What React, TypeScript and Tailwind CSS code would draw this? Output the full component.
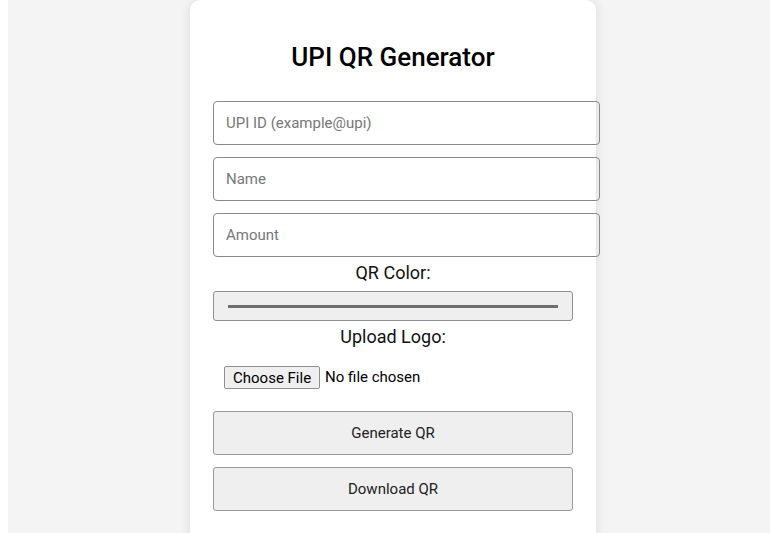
import React from 'react';

const font = { fontFamily: 'Roboto, "Noto Sans", sans-serif' };

export default function App() {
  return (
    <div className="h-[533px] overflow-hidden bg-white pl-2" style={font}>
      <div className="h-full bg-[#f4f4f4]">
        <div className="ml-[182px] h-[560px] w-[406px] rounded-[10px] bg-white px-[23px] pt-[42px] shadow-[0_0_12px_rgba(0,0,0,0.1)]">
          <h2 className="text-center text-[26px] leading-[30px] font-medium text-black">UPI QR Generator</h2>

          <div className="mt-[29px] flex flex-col">
            <input
              type="text"
              placeholder="UPI ID (example@upi)"
              className="box-content block w-full rounded-[4px] border border-[#8a8a8a] py-3 pl-3 pr-[13px] text-[15px] leading-[18px] placeholder:text-[#777] focus:outline-none"
            />
            <input
              type="text"
              placeholder="Name"
              className="mt-3 box-content block w-full rounded-[4px] border border-[#8a8a8a] py-3 pl-3 pr-[13px] text-[15px] leading-[18px] placeholder:text-[#777] focus:outline-none"
            />
            <input
              type="number"
              placeholder="Amount"
              className="mt-3 box-content block w-full rounded-[4px] border border-[#8a8a8a] py-3 pl-3 pr-[13px] text-[15px] leading-[18px] placeholder:text-[#777] focus:outline-none"
            />

            <label className="mt-[5px] block text-center text-[18px] leading-[22px] text-[#111]">QR Color:</label>
            <div className="mt-[7px] flex h-[30px] w-full items-center rounded-[3px] border border-[#8f8f8f] bg-[#efefef] px-[14px]">
              <div className="h-[3px] w-full bg-[#6f6f6f]" />
            </div>

            <label className="mt-[5px] block text-center text-[18px] leading-[22px] text-[#111]">Upload Logo:</label>
            <div className="mt-[18px] ml-[11px] flex h-[23px] items-center text-[15px] text-black">
              <button className="h-[23px] rounded-[2px] border border-[#8f8f8f] bg-[#efefef] px-[8px] leading-[18px]">
                Choose File
              </button>
              <span className="ml-[5px]">No file chosen</span>
            </div>

            <button className="mt-[22px] h-[44px] w-full rounded-[3px] border border-[#9a9a9a] bg-[#efefef] text-[15px] text-[#222]">
              Generate QR
            </button>
            <button className="mt-3 h-[44px] w-full rounded-[3px] border border-[#9a9a9a] bg-[#efefef] text-[15px] text-[#222]">
              Download QR
            </button>
          </div>
        </div>
      </div>
    </div>
  );
}
